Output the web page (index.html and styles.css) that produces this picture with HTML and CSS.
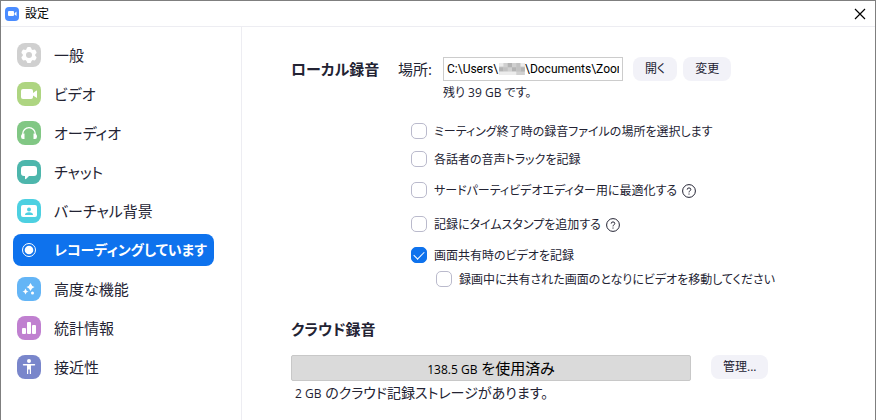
FILE: index.html
```
<!DOCTYPE html>
<html lang="ja">
<head>
<meta charset="utf-8">
<title>設定</title>
<link rel="stylesheet" href="styles.css">
</head>
<body>
<div class="window">
  <header class="titlebar">
    <svg class="logo" viewBox="0 0 14 14"><rect width="14" height="14" rx="4" fill="#4a8cff"/><rect x="3" y="4" width="6" height="5" rx="1" fill="#fff"/><path d="M9.500 6.200L11.500 4.500V9L9.500 7.500Z" fill="#fff"/></svg>
    <h1>設定</h1>
    <button class="close" aria-label="閉じる"><svg viewBox="0 0 12 12"><path d="M1 1L11 11M11 1L1 11" stroke="#000" stroke-width="1.200"/></svg></button>
  </header>

  <div class="body">
    <nav class="side">
      <a href="#general"><svg viewBox="0 0 24 24"><rect width="24" height="24" rx="8" fill="#d0d0d0"/><g fill="#fff"><circle cx="12" cy="12" r="6.300"/><rect x="9.700" y="4" width="4.600" height="16" rx="1.500"/><rect x="9.700" y="4" width="4.600" height="16" rx="1.500" transform="rotate(60 12 12)"/><rect x="9.700" y="4" width="4.600" height="16" rx="1.500" transform="rotate(120 12 12)"/></g><circle cx="12" cy="12" r="3" fill="#d0d0d0"/></svg>一般</a>
      <a href="#video"><svg viewBox="0 0 24 24"><rect width="24" height="24" rx="8" fill="#aed581"/><rect x="4" y="7" width="12" height="10" rx="2" fill="#fff"/><path d="M16 11L19.500 8.500Q20 8.200 20 9V15.500Q20 16.200 19.500 15.800L16 13.500Z" fill="#fff"/></svg>ビデオ</a>
      <a href="#audio"><svg viewBox="0 0 24 24"><rect width="24" height="24" rx="8" fill="#81c784"/><path d="M5.700 16V13A6.300 6.300 0 0 1 18.300 13V16" fill="none" stroke="#fff" stroke-width="1.300"/><path d="M7.500 12.500V18H6Q4 18 4 15.500Q4 12.500 7.500 12.500ZM16.500 12.500V18H18Q20 18 20 15.500Q20 12.500 16.500 12.500Z" fill="#fff"/></svg>オーディオ</a>
      <a href="#chat"><svg viewBox="0 0 24 24"><rect width="24" height="24" rx="8" fill="#4db6ac"/><path d="M7 6H17Q20 6 20 9V13Q20 16 17 16H12L9 19Q8 19.500 8 18.500V16H7Q4 16 4 13V9Q4 6 7 6Z" fill="#fff"/></svg>チャット</a>
      <a href="#background"><svg viewBox="0 0 24 24"><rect width="24" height="24" rx="8" fill="#4dd0e1"/><rect x="4" y="6" width="16" height="12" rx="2" fill="#fff"/><circle cx="12" cy="10.500" r="2" fill="#4dd0e1"/><path d="M8 16Q8 13.300 12 13.300Q16 13.300 16 16Z" fill="#4dd0e1"/></svg>バーチャル背景</a>
      <a href="#recording" class="active"><svg viewBox="0 0 24 24"><circle cx="12" cy="12" r="6.500" fill="none" stroke="#fff"/><circle cx="12" cy="12" r="4.300" fill="#fff"/></svg>レコーディングしています</a>
      <a href="#advanced"><svg viewBox="0 0 24 24"><rect width="24" height="24" rx="8" fill="#64b5f6"/><g fill="#fff"><path d="M13.500 6Q14.500 9 17.500 10Q14.500 11 13.500 14Q12.500 11 9.500 10Q12.500 9 13.500 6Z"/><path d="M8.500 11.500Q9 14 11.500 14.500Q9 15 8.500 17.500Q8 15 5.500 14.500Q8 14 8.500 11.500Z"/><circle cx="15.500" cy="16" r="1.500"/></g></svg>高度な機能</a>
      <a href="#stats"><svg viewBox="0 0 24 24"><rect width="24" height="24" rx="8" fill="#c080d0"/><g fill="#fff"><rect x="5" y="12" width="4" height="6" rx="1"/><rect x="10" y="6" width="4" height="12" rx="1"/><rect x="15" y="9" width="4" height="9" rx="1"/></g></svg>統計情報</a>
      <a href="#access"><svg viewBox="0 0 24 24"><rect width="24" height="24" rx="8" fill="#7986cb"/><circle cx="12" cy="6" r="2" fill="#fff"/><path d="M6.500 9.700H17.500" stroke="#fff" stroke-width="1.400" stroke-linecap="round"/><path d="M10 9.500H14V19H12.800V14.500H11.200V19H10Z" fill="#fff"/></svg>接近性</a>
    </nav>

    <main class="content">
      <section class="local">
        <h2>ローカル録音</h2>
        <label class="place" for="path">場所:</label>
        <div class="path">
          <input type="text" id="path" value="C:\Users\&nbsp;&nbsp;&nbsp;&nbsp;&nbsp;&nbsp;&nbsp;&nbsp;&nbsp;\Documents\Zoom">
          <svg class="mosaic" viewBox="0 0 30 14"><rect width="30" height="14" fill="#d0d0d0"/><g fill="#b4b4b4"><rect y="5" width="5" height="5"/><rect x="10" y="0" width="5" height="5"/><rect x="15" y="5" width="5" height="5"/><rect x="25" y="5" width="5" height="5"/></g><g fill="#c2c2c2"><rect x="5" y="5" width="5" height="5"/><rect x="20" width="5" height="10"/></g><g fill="#ececec"><rect width="5" height="4"/><rect y="10" width="20" height="4"/><rect x="25" width="5" height="4"/></g></svg>
        </div>
        <button class="btn">開く</button>
        <button class="btn">変更</button>
      </section>
      <p class="left">残り 39 GB です。</p>

      <div class="options">
        <label><input type="checkbox">ミーティング終了時の録音ファイルの場所を選択します</label>
        <label><input type="checkbox">各話者の音声トラックを記録</label>
        <label class="tall"><input type="checkbox">サードパーティビデオエディター用に最適化する<svg class="help" viewBox="0 0 14 14"><circle cx="7" cy="7" r="6.400"/><path d="M5.200 5.600Q5.200 3.900 7 3.900Q8.800 3.900 8.800 5.500Q8.800 6.400 7.800 6.900Q7 7.300 7 8.400M7 9.500V10.600"/></svg></label>
        <label class="tall"><input type="checkbox">記録にタイムスタンプを追加する<svg class="help" viewBox="0 0 14 14"><circle cx="7" cy="7" r="6.400"/><path d="M5.200 5.600Q5.200 3.900 7 3.900Q8.800 3.900 8.800 5.500Q8.800 6.400 7.800 6.900Q7 7.300 7 8.400M7 9.500V10.600"/></svg></label>
        <label><input type="checkbox" checked>画面共有時のビデオを記録</label>
        <label class="sub"><input type="checkbox">録画中に共有された画面のとなりにビデオを移動してください</label>
      </div>

      <h2>クラウド録音</h2>
      <section class="cloud">
        <div class="usage"><small>138.5 GB</small> を使用済み</div>
        <button class="btn">管理...</button>
      </section>
      <p class="storage"><small>2 GB</small> のクラウド記録ストレージがあります。</p>
    </main>
  </div>
</div>
</body>
</html>
```
FILE: styles.css
```
*{
	margin:0;
	padding:0;
	box-sizing:border-box;
	}
body{
	font-family:"Open Sans","Noto Sans CJK JP",sans-serif;
	font-feature-settings:"palt";
	font-size:12px;
	color:#232333;
	background:#fff;
	}
input,button{
	font:inherit;
	font-feature-settings:inherit;
	color:inherit;
	}
.window{
	display:flex;
	flex-direction:column;
	min-height:100vh;
	border:1px solid #7f7f7f;
	border-bottom:0;
	}
.titlebar{
	display:flex;
	align-items:center;
	height:26px;
	padding:0 8px 0 4px;
	border-bottom:1px solid #ededf2;
	}
.logo{
	width:14px;
	height:14px;
	}
.titlebar h1{
	margin-left:6px;
	font-size:12px;
	font-weight:normal;
	line-height:20px;
	color:#000;
	}
.close{
	width:14px;
	height:14px;
	margin-left:auto;
	border:0;
	background:none;
	}
.close svg{
	display:block;
	width:12px;
	height:12px;
	margin:auto;
	}
.body{
	display:flex;
	flex:1;
	}
/* 左メニュー */
.side{
	display:flex;
	flex:none;
	flex-direction:column;
	gap:7px;
	width:241px;
	padding:12px 27px 0 12px;
	border-right:1px solid #ededf2;
	}
.side a{
	display:flex;
	align-items:center;
	gap:13px;
	height:32px;
	padding-left:4px;
	border-radius:8px;
	font-size:15px;
	line-height:24px;
	white-space:nowrap;
	color:#232333;
	text-decoration:none;
	}
.side a.active{
	background:#0e72ed;
	color:#fff;
	font-size:14px;
	font-weight:bold;
	}
.side svg{
	flex:none;
	width:24px;
	height:24px;
	}
/* 右側の設定 */
.content{
	flex:1;
	padding:30px 16px 0 49px;
	}
h2{
	font-size:15px;
	line-height:24px;
	white-space:nowrap;
	}
.local{
	display:flex;
	align-items:center;
	}
.local h2{
	width:107px;
	}
.place{
	width:45px;
	font-size:15px;
	line-height:24px;
	white-space:nowrap;
	}
.path{
	position:relative;
	width:180px;
	margin-right:10px;
	}
.path input{
	display:block;
	width:100%;
	height:24px;
	padding:0 3px;
	border:1px solid #ccc;
	font-family:Roboto,"Noto Sans CJK JP",sans-serif;
	color:#000;
	}
.mosaic{
	position:absolute;
	left:56px;
	top:6px;
	width:26px;
	height:12px;
	}
.btn{
	height:24px;
	padding:0 12px;
	border:0;
	border-radius:8px;
	background:#f2f2f8;
	line-height:24px;
	}
.btn + .btn{
	margin-left:6px;
	}
.left{
	padding-left:152px;
	line-height:24px;
	}
.options{
	padding:12px 0 28px 120px;
	}
.options label{
	display:flex;
	align-items:center;
	height:28px;
	white-space:nowrap;
	}
.options label.tall{
	height:34px;
	}
.options label.sub{
	height:20px;
	padding-left:25px;
	}
.options input{
	appearance:none;
	flex:none;
	width:16px;
	height:16px;
	margin-right:7px;
	border:1px solid #babacc;
	border-radius:5px;
	background:#fff;
	}
.options input:checked{
	display:flex;
	align-items:center;
	justify-content:center;
	border-color:#0e72ed;
	background:#0e72ed;
	}
.options input:checked:after{
	content:"";
	width:5px;
	height:9px;
	margin-bottom:3px;
	border:solid #fff;
	border-width:0 1px 1px 0;
	transform:rotate(45deg);
	}
.help{
	width:14px;
	height:14px;
	margin:2px 0 0 5px;
	fill:none;
	stroke:#232333;
	}
.cloud{
	display:flex;
	align-items:flex-start;
	gap:20px;
	margin-top:14px;
	}
.usage{
	flex:0 1 400px;
	height:26px;
	border:1px solid #c8c8c8;
	border-radius:2px;
	background:#dadada;
	font-size:15px;
	line-height:24px;
	text-align:center;
	color:#000;
	}
small{
	font-size:12px;
	}
.storage{
	padding-left:4px;
	font-size:14px;
	line-height:24px;
	}
```
